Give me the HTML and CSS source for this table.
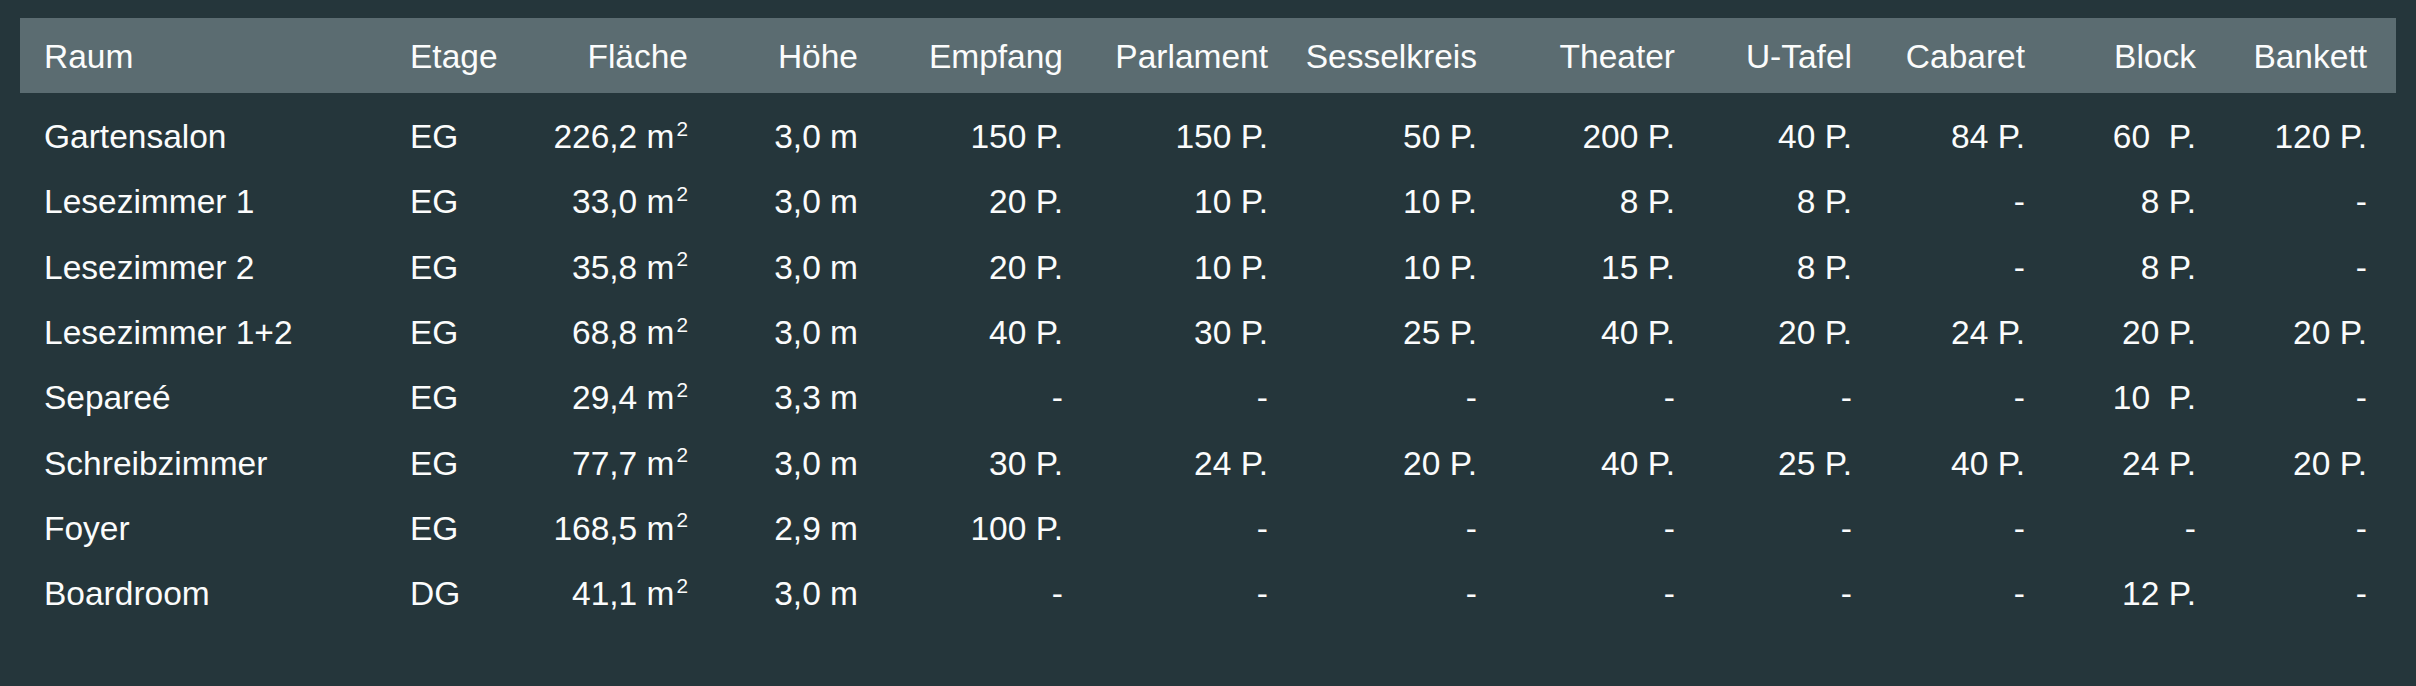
FILE: index.html
```html
<!DOCTYPE html>
<html lang="de">
<head>
<meta charset="utf-8">
<title>Räume</title>
<link rel="stylesheet" href="styles.css">
</head>
<body>
<table class="rooms">
  <colgroup>
    <col class="c-raum"><col class="c-etage"><col class="c-flaeche"><col class="c-hoehe">
    <col class="c-empfang"><col class="c-parlament"><col class="c-sessel"><col class="c-theater">
    <col class="c-utafel"><col class="c-cabaret"><col class="c-block"><col class="c-bankett">
  </colgroup>
  <thead>
    <tr>
      <th class="l">Raum</th><th class="l">Etage</th><th>Fläche</th><th>Höhe</th>
      <th>Empfang</th><th>Parlament</th><th>Sesselkreis</th><th>Theater</th>
      <th>U-Tafel</th><th>Cabaret</th><th>Block</th><th>Bankett</th>
    </tr>
  </thead>
  <tbody>
    <tr class="first">
      <td class="l">Gartensalon</td><td class="l">EG</td><td>226,2 m<sup>2</sup></td><td>3,0 m</td>
      <td>150 P.</td><td>150 P.</td><td>50 P.</td><td>200 P.</td><td>40 P.</td><td>84 P.</td><td>60&nbsp; P.</td><td>120 P.</td>
    </tr>
    <tr>
      <td class="l">Lesezimmer 1</td><td class="l">EG</td><td>33,0 m<sup>2</sup></td><td>3,0 m</td>
      <td>20 P.</td><td>10 P.</td><td>10 P.</td><td>8 P.</td><td>8 P.</td><td>-</td><td>8 P.</td><td>-</td>
    </tr>
    <tr>
      <td class="l">Lesezimmer 2</td><td class="l">EG</td><td>35,8 m<sup>2</sup></td><td>3,0 m</td>
      <td>20 P.</td><td>10 P.</td><td>10 P.</td><td>15 P.</td><td>8 P.</td><td>-</td><td>8 P.</td><td>-</td>
    </tr>
    <tr>
      <td class="l">Lesezimmer 1+2</td><td class="l">EG</td><td>68,8 m<sup>2</sup></td><td>3,0 m</td>
      <td>40 P.</td><td>30 P.</td><td>25 P.</td><td>40 P.</td><td>20 P.</td><td>24 P.</td><td>20 P.</td><td>20 P.</td>
    </tr>
    <tr>
      <td class="l">Separeé</td><td class="l">EG</td><td>29,4 m<sup>2</sup></td><td>3,3 m</td>
      <td>-</td><td>-</td><td>-</td><td>-</td><td>-</td><td>-</td><td>10&nbsp; P.</td><td>-</td>
    </tr>
    <tr>
      <td class="l">Schreibzimmer</td><td class="l">EG</td><td>77,7 m<sup>2</sup></td><td>3,0 m</td>
      <td>30 P.</td><td>24 P.</td><td>20 P.</td><td>40 P.</td><td>25 P.</td><td>40 P.</td><td>24 P.</td><td>20 P.</td>
    </tr>
    <tr>
      <td class="l">Foyer</td><td class="l">EG</td><td>168,5 m<sup>2</sup></td><td>2,9 m</td>
      <td>100 P.</td><td>-</td><td>-</td><td>-</td><td>-</td><td>-</td><td>-</td><td>-</td>
    </tr>
    <tr>
      <td class="l">Boardroom</td><td class="l">DG</td><td>41,1 m<sup>2</sup></td><td>3,0 m</td>
      <td>-</td><td>-</td><td>-</td><td>-</td><td>-</td><td>-</td><td>12 P.</td><td>-</td>
    </tr>
  </tbody>
</table>
</body>
</html>
```

FILE: styles.css
```css
html, body {
  margin: 0;
  background: #25363b;
}
body {
  padding: 18px 20px 40px;
  font-family: "Liberation Sans", Arial, sans-serif;
  font-size: 33.5px;
  color: #fbfcfc;
}
.rooms {
  width: 2376px;
  border-collapse: collapse;
  border-spacing: 0;
  table-layout: fixed;
}
.c-raum { width: 366px; }
.c-etage { width: 154px; }
.c-flaeche { width: 172px; }
.c-hoehe { width: 170px; }
.c-empfang { width: 205px; }
.c-parlament { width: 205px; }
.c-sessel { width: 209px; }
.c-theater { width: 198px; }
.c-utafel { width: 177px; }
.c-cabaret { width: 173px; }
.c-block { width: 171px; }
.c-bankett { width: 176px; }

.rooms th,
.rooms td {
  padding: 0 24px 0 4px;
  text-align: right;
  white-space: nowrap;
  font-weight: normal;
  line-height: 40px;
  vertical-align: top;
}
.rooms th:last-child,
.rooms td:last-child {
  padding-right: 29px;
}
.rooms .l {
  text-align: left;
  padding-left: 24px;
  padding-right: 4px;
}
.rooms thead tr {
  background: #5b6c71;
}
.rooms th {
  height: 75px;
  box-sizing: border-box;
  padding-top: 19px;
  padding-bottom: 16px;
}
.rooms td {
  height: 65.3px;
  box-sizing: border-box;
  padding-top: 12.7px;
  padding-bottom: 12.6px;
}
.rooms tr.first td {
  height: 76.7px;
  padding-top: 24.1px;
}
.rooms sup {
  font-size: 0.62em;
  line-height: 0;
  vertical-align: 0.6em;
  margin-left: 2px;
}
```
